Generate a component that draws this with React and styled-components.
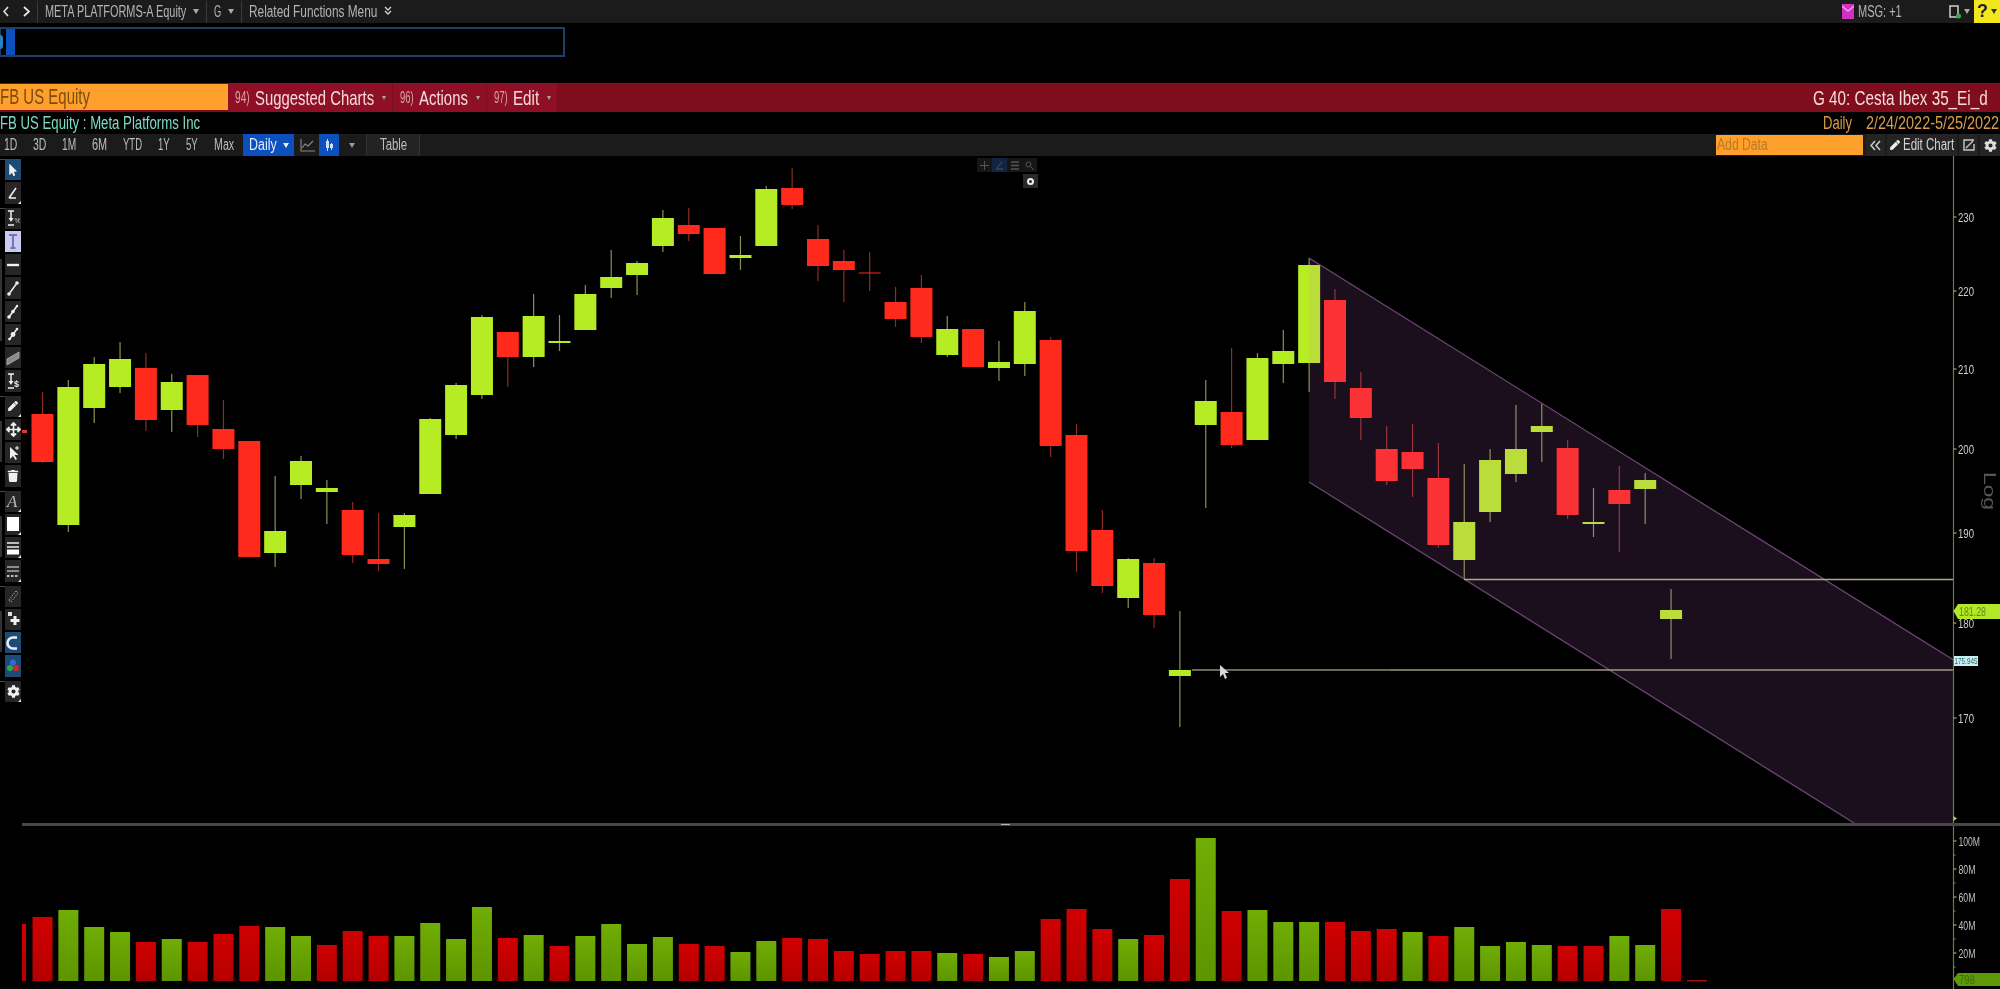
import React, { useLayoutEffect, useRef } from "react";
import styled, { createGlobalStyle } from "styled-components";
import { FaMousePointer, FaPen, FaArrowsAlt, FaTrash, FaCog } from "react-icons/fa";

const SANS = '"Liberation Sans", Arial, sans-serif';

const GlobalStyle = createGlobalStyle`
  html, body {
    margin: 0;
    background: #000;
  }
  body {
    font-family: ${SANS};
  }
`;

const Screen = styled.div`
  width: 2000px;
  height: 989px;
  overflow: hidden;
  background: #000;
  display: flex;
  flex-direction: column;
  filter: blur(0.45px);
`;

// the terminal font is far narrower than anything installed, so squeeze the text to its real width
const Squeezed = styled.span`
  display: inline-block;
  flex: none;
  width: ${(p) => p.$w}px;
  white-space: nowrap;
  transform-origin: 0 50%;
`;

const Fit = ({ w, children }) => {
  const ref = useRef(null);
  useLayoutEffect(() => {
    ref.current.style.transform = `scaleX(${w / ref.current.scrollWidth})`;
  }, [w]);
  return (
    <Squeezed ref={ref} $w={w}>
      {children}
    </Squeezed>
  );
};

/* top menu bar */
const TopBar = styled.div`
  height: 23px;
  flex: none;
  background: #1b1b1b;
  display: flex;
  align-items: center;
  color: #b4b4b4;
  font-size: 16px;
`;

const NavArrows = styled.div`
  width: 37px;
  display: flex;
  gap: 14px;
  padding-left: 3px;
  box-sizing: border-box;
`;

const TopItem = styled.div`
  height: 22px;
  display: flex;
  align-items: center;
  gap: 7px;
  padding: 0 7px;
  border-left: 1px solid #3a3a3a;
`;

const Caret = styled.span`
  flex: none;
  width: 0;
  height: 0;
  border-left: 3px solid transparent;
  border-right: 3px solid transparent;
  border-top: 5px solid ${(p) => p.$color || "#a9a9a9"};
`;

const TopRight = styled.div`
  margin-left: auto;
  display: flex;
  align-items: center;
  height: 23px;
`;

const MsgText = styled.span`
  display: flex;
  margin: 0 47px 0 4px;
`;

const WindowCaret = styled(Caret)`
  margin-left: 2px;
`;

const HelpBox = styled.div`
  width: 26px;
  height: 23px;
  margin-left: 4px;
  background: #f4e61c;
  color: #222;
  font-size: 18px;
  font-weight: 700;
  display: flex;
  align-items: center;
  justify-content: center;
  gap: 3px;
`;

/* command line */
const CommandRow = styled.div`
  height: 60px;
  flex: none;
  padding-top: 4px;
  box-sizing: border-box;
`;

const CommandBox = styled.div`
  width: 566px;
  height: 30px;
  margin-left: -1px;
  box-sizing: border-box;
  border: 2px solid #1e3f68;
  display: flex;
  align-items: stretch;
`;

const PromptMark = styled.span`
  width: 3px;
  margin: 6px 3px 6px -1px;
  background: #2a7fc0;
  border-radius: 0 3px 3px 0;
`;

const Cursor = styled.span`
  width: 9px;
  background: #0b50bd;
`;

/* red title bar */
const TitleBar = styled.div`
  height: 29px;
  flex: none;
  background: #7f0d1c;
  display: flex;
  align-items: stretch;
  color: #f3dcdc;
  font-size: 21px;
`;

const SecurityField = styled.div`
  width: 228px;
  margin: 1px 0 2px;
  background: #ffa02c;
  color: #7a4d0e;
  font-size: 22px;
  display: flex;
  align-items: center;
`;

const TitleButton = styled.div`
  display: flex;
  align-items: center;
  gap: 5px;
  padding: 0 6px 0 7px;
  background: #8f1026;
  border-right: 1px solid #7a0d1d;
`;

const ButtonNumber = styled.span`
  display: flex;
  color: #d9a0a8;
  font-size: 17px;
`;

const TitleCaret = styled(Caret)`
  margin-left: 3px;
  border-left-width: 2px;
  border-right-width: 2px;
  border-top-width: 4px;
`;

const TitleRight = styled.div`
  margin-left: auto;
  padding-right: 12px;
  display: flex;
  align-items: center;
`;

/* security name and range */
const InfoRow = styled.div`
  height: 22px;
  flex: none;
  display: flex;
  align-items: center;
  justify-content: space-between;
  font-size: 18px;
`;

const SecurityName = styled.div`
  display: flex;
  color: #7cdcc4;
`;

const RangeText = styled.div`
  color: #dc9c46;
  display: flex;
  gap: 14px;
  padding-right: 1px;
`;

/* period tabs */
const TabRow = styled.div`
  height: 22px;
  flex: none;
  background: #1b1b1b;
  display: flex;
  align-items: stretch;
  color: #bdbdbd;
  font-size: 16px;
`;

const PeriodTab = styled.div`
  padding: 0 8px;
  display: flex;
  align-items: center;
  &:first-child {
    padding-left: 4px;
  }
`;

const BlueTab = styled.div`
  margin-left: ${(p) => p.$gap || 0}px;
  width: ${(p) => p.$w}px;
  background: #0b50bd;
  color: #e6eefc;
  display: flex;
  align-items: center;
  justify-content: center;
  gap: 6px;
`;

const IconTab = styled.div`
  width: 24px;
  margin-left: 1px;
  display: flex;
  align-items: center;
  justify-content: center;
`;

const TableTab = styled.div`
  margin-left: 2px;
  width: 52px;
  background: #232323;
  border-left: 1px solid #333;
  border-right: 1px solid #333;
  display: flex;
  align-items: center;
  justify-content: center;
`;

const TabRight = styled.div`
  margin-left: auto;
  display: flex;
  align-items: stretch;
`;

const AddData = styled.div`
  width: 147px;
  margin: 1px 1px 1px 0;
  background: #ffa02c;
  color: #b87a22;
  padding-left: 1px;
  box-sizing: border-box;
  display: flex;
  align-items: center;
`;

const RightTab = styled.div`
  width: ${(p) => p.$w}px;
  margin-left: 2px;
  background: #242424;
  display: flex;
  align-items: center;
  justify-content: center;
  gap: 3px;
  color: #d4d4d4;
`;

/* chart body */
const Body = styled.div`
  flex: 1;
  display: flex;
  min-height: 0;
`;

const ToolRail = styled.div`
  width: 22px;
  flex: none;
  padding-top: 3px;
  box-sizing: border-box;
  display: flex;
  flex-direction: column;
  gap: 4px;
`;

const ToolGroup = styled.div`
  display: flex;
  align-items: stretch;
`;

// the group captions sit behind the rail's edge and can't be read, only a sliver shows
const GroupEdge = styled.div`
  width: 5px;
  flex: none;
  border-top: 1px solid #4a4a4a;
  display: flex;
  align-items: center;
  &::before {
    content: "";
    width: 2px;
    height: ${(p) => (p.$long ? "45%" : "0")};
    background: #333;
  }
`;

const ToolColumn = styled.div`
  width: 16px;
  display: flex;
  flex-direction: column;
  gap: 2px;
`;

const ToolButton = styled.div`
  position: relative;
  height: 21.25px;
  background: ${(p) => p.$bg || "#262626"};
  color: #f0f0f0;
  display: flex;
  align-items: center;
  justify-content: center;
  &::after {
    content: "";
    display: ${(p) => (p.$menu ? "block" : "none")};
    position: absolute;
    right: 0;
    bottom: 0;
    border-left: 3px solid transparent;
    border-bottom: 3px solid #e8e8e8;
  }
`;

const ChartColumn = styled.div`
  position: relative;
  flex: 1;
  display: flex;
  flex-direction: column;
  min-width: 0;
`;

const PriceSvg = styled.svg`
  display: block;
  width: 1978px;
  height: 667px;
  flex: none;
`;

const Divider = styled.div`
  position: relative;
  height: 3px;
  flex: none;
  background: #474747;
`;

const DividerGrip = styled.span`
  position: absolute;
  left: 979px;
  top: 1px;
  width: 9px;
  height: 1px;
  background: #b5b5b5;
`;

const VolumeSvg = styled.svg`
  display: block;
  width: 1978px;
  height: 163px;
  flex: none;
`;

const ZoomTools = styled.div`
  position: absolute;
  left: 955px;
  top: 2px;
  display: flex;
`;

const ZoomTool = styled.div`
  width: 15px;
  height: 14px;
  background: ${(p) => (p.$active ? "#122440" : "#161616")};
  display: flex;
  align-items: center;
  justify-content: center;
`;

const ResetTool = styled.div`
  position: absolute;
  left: 1001px;
  top: 18px;
  width: 15px;
  height: 14px;
  background: #2a2a2a;
  display: flex;
  align-items: center;
  justify-content: center;
`;

const RingDot = styled.span`
  width: 3px;
  height: 3px;
  border: 2px solid #eee;
  border-radius: 50%;
`;

// [bodyTop, bodyBottom, wickTop, wickBottom, colour]
const candles = [
  [414, 462, 392, 463, "r"], [387, 525, 380, 532, "g"], [364, 408, 357, 423, "g"], [359, 387, 342, 393, "g"],
  [368, 420, 353, 431, "r"], [382, 410, 374, 432, "g"], [375, 425, 375, 437, "r"], [429, 449, 400, 459, "r"],
  [441, 557, 441, 557, "r"], [531, 553, 476, 567, "g"], [461, 485, 456, 499, "g"], [488, 492, 480, 524, "g"],
  [510, 555, 502, 563, "r"], [559, 564, 513, 571, "r"], [515, 527, 513, 569, "g"], [419, 494, 418, 494, "g"],
  [385, 435, 383, 439, "g"], [317, 395, 315, 399, "g"], [332, 357, 332, 387, "r"], [316, 357, 294, 367, "g"],
  [341, 343, 315, 351, "g"], [294, 330, 285, 330, "g"], [277, 288, 250, 298, "g"], [263, 275, 261, 295, "g"],
  [218, 246, 210, 252, "g"], [225, 234, 208, 241, "r"], [228, 274, 228, 274, "r"], [255, 258, 236, 270, "g"],
  [189, 246, 186, 246, "g"], [188, 205, 168, 209, "r"], [239, 266, 225, 281, "r"], [261, 270, 250, 302, "r"],
  [272.5, 273.5, 252, 291, "r"], [302, 319, 287, 327, "r"], [288, 337, 275, 343, "r"], [329, 355, 316, 357, "g"],
  [329, 367, 329, 367, "r"], [362, 368, 341, 381, "g"], [311, 364, 302, 376, "g"], [340, 446, 337, 457, "r"],
  [435, 551, 424, 572, "r"], [530, 586, 510, 593, "r"], [559, 598, 558, 608, "g"], [563, 615, 558, 628, "r"],
  [670, 676, 611, 727, "g"], [401, 425, 380, 508, "g"], [412, 445, 348, 448, "r"], [358, 440, 353, 440, "g"],
  [351, 364, 330, 383, "g"], [265, 363, 258, 392, "g"], [300, 382, 289, 399, "r"], [388, 418, 372, 440, "r"],
  [449, 481, 426, 485, "r"], [452, 469, 424, 497, "r"], [478, 545, 443, 548, "r"], [522, 560, 464, 579, "g"],
  [460, 512, 449, 522, "g"], [449, 474, 405, 482, "g"], [426, 432, 404, 462, "g"], [448, 515, 440, 519, "r"],
  [522, 524, 488, 537, "g"], [490, 504, 466, 552, "r"], [480, 489, 473, 524, "g"], [610, 619, 589, 659, "g"],
];

// [barTop, colour]
const volumes = [
  [917, "r"], [910, "g"], [927, "g"], [932, "g"], [942, "r"], [939, "g"], [942, "r"], [934, "r"], [926, "r"],
  [927, "g"], [936, "g"], [945, "r"], [931, "r"], [936, "r"], [936, "g"], [923, "g"], [939, "g"], [907, "g"],
  [938, "r"], [935, "g"], [946, "r"], [936, "g"], [924, "g"], [944, "g"], [937, "g"], [944, "r"], [946, "r"],
  [952, "g"], [941, "g"], [938, "r"], [939, "r"], [951, "r"], [954, "r"], [951, "r"], [951, "r"], [953, "g"],
  [954, "r"], [957, "g"], [951, "g"], [919, "r"], [909, "r"], [929, "r"], [939, "g"], [935, "r"], [879, "r"],
  [838, "g"], [911, "r"], [910, "g"], [922, "g"], [922, "g"], [922, "r"], [931, "r"], [929, "r"], [932, "g"],
  [936, "r"], [927, "g"], [946, "g"], [942, "g"], [945, "g"], [946, "r"], [946, "r"], [936, "g"], [945, "g"],
  [909, "r"],
];

const priceTicks = [
  [217, "230"], [291, "220"], [369, "210"], [449, "200"], [533, "190"], [623, "180"], [718, "170"],
];
const volumeTicks = [
  [841, "100M", 21.5], [869, "80M", 17], [897, "60M", 17], [925, "40M", 17], [953, "20M", 17],
];

const slotX = (i) => 42.5 + 25.85 * i;
const AXIS_X = 1953.5;
const AXIS_COLOR = "#64804a";

const PriceChart = () => (
  <PriceSvg viewBox="22 156 1978 667">
    {/* bar cut off by the tool rail */}
    <rect x="16" y="430" width="11" height="3" fill="#e8362a" />
    {candles.map(([top, bottom, wickTop, wickBottom, tone], i) => {
      const x = slotX(i);
      return (
        <g key={i}>
          <line
            x1={x}
            x2={x}
            y1={wickTop}
            y2={wickBottom}
            stroke={tone === "g" ? "#87944f" : "#8f2c22"}
            strokeWidth="1.2"
          />
          <rect
            x={x - 11}
            y={top}
            width="22"
            height={bottom - top}
            fill={tone === "g" ? "#b5ec24" : "#ff2a1c"}
          />
        </g>
      );
    })}
    <polygon
      points={`1309,258 ${AXIS_X},660 ${AXIS_X},823 1854,823 1309,482`}
      fill="rgba(224,112,240,0.12)"
    />
    <polyline points={`1309,258 ${AXIS_X},660`} fill="none" stroke="#6f4a75" strokeWidth="1.2" />
    <polyline points="1309,482 1854,823" fill="none" stroke="#6f4a75" strokeWidth="1.2" />
    <line x1="1464" x2={AXIS_X} y1="579.5" y2="579.5" stroke="#b3a88e" strokeWidth="1.5" />
    <line x1="1192" x2="1390" y1="670" y2="670" stroke="#8f8a78" strokeWidth="1.5" />
    <line x1="1390" x2={AXIS_X} y1="670" y2="670" stroke="#a09a84" strokeWidth="1.5" />
    {/* mouse pointer */}
    <path d="M1220 665 l0 12 l3 -3 l2 5 l2 -1 l-2 -5 l4 0 z" fill="#d8d8d8" />
    <line x1={AXIS_X} x2={AXIS_X} y1="156" y2="823" stroke={AXIS_COLOR} strokeWidth="1.2" />
    <g fontFamily={SANS} fontSize="13.5" fill="#cfcfcf">
      {priceTicks.map(([y, label]) => (
        <g key={label}>
          <line x1={AXIS_X} x2={AXIS_X + 3} y1={y} y2={y} stroke="#b5d060" />
          <text x="1958" y={y + 5} textLength="16" lengthAdjust="spacingAndGlyphs">{label}</text>
        </g>
      ))}
    </g>
    <text
      transform="translate(1983.5 491) rotate(90)"
      textAnchor="middle"
      fontFamily={SANS}
      fontSize="17"
      fill="#565656"
      textLength="38"
      lengthAdjust="spacingAndGlyphs"
    >
      Log
    </text>
    <polygon points={`${AXIS_X},611 1958,604 2000,604 2000,619 1958,619`} fill="#b4e62a" />
    <text x="1959" y="616" fontFamily={SANS} fontSize="13" fill="#5f8a0c" textLength="27" lengthAdjust="spacingAndGlyphs">181.28</text>
    <rect x="1954" y="656" width="24" height="10" fill="#c9eeee" />
    <text x="1954.5" y="664" fontFamily={SANS} fontSize="9.5" fill="#2f6f7a" textLength="23" lengthAdjust="spacingAndGlyphs">175.945</text>
    <polygon points={`${AXIS_X},816 1957,818.5 ${AXIS_X},821`} fill="#b5d060" />
  </PriceSvg>
);

const VolumeChart = () => (
  <VolumeSvg viewBox="22 826 1978 163">
    <defs>
      <linearGradient id="volGreen" x1="0" x2="0" y1="0" y2="1">
        <stop offset="0" stopColor="#70ad05" />
        <stop offset="1" stopColor="#5d9400" />
      </linearGradient>
      <linearGradient id="volRed" x1="0" x2="0" y1="0" y2="1">
        <stop offset="0" stopColor="#d00000" />
        <stop offset="1" stopColor="#b40000" />
      </linearGradient>
    </defs>
    <rect x="16" y="924" width="10" height="57" fill="url(#volRed)" />
    {volumes.map(([top, tone], i) => (
      <rect
        key={i}
        x={slotX(i) - 10}
        y={top}
        width="20"
        height={981 - top}
        fill={tone === "g" ? "url(#volGreen)" : "url(#volRed)"}
      />
    ))}
    <rect x="1687" y="980" width="20" height="1.5" fill="#a01010" />
    <line x1={AXIS_X} x2={AXIS_X} y1="826" y2="989" stroke={AXIS_COLOR} strokeWidth="1.2" />
    <g fontFamily={SANS} fontSize="13" fill="#bfbfbf">
      {volumeTicks.map(([y, label, width]) => (
        <g key={label}>
          <line x1={AXIS_X} x2={AXIS_X + 3} y1={y} y2={y} stroke="#b5d060" />
          <line x1={AXIS_X} x2={AXIS_X + 2} y1={y + 14} y2={y + 14} stroke="#7f9a50" />
          <text x="1958.5" y={y + 5} textLength={width} lengthAdjust="spacingAndGlyphs">{label}</text>
        </g>
      ))}
    </g>
    <polygon points={`${AXIS_X},979 1958,973 2000,973 2000,986 1958,986`} fill="#5e9a08" />
    <text x="1959" y="984" fontFamily={SANS} fontSize="13" fill="#3f6a08" textLength="16" lengthAdjust="spacingAndGlyphs">798</text>
  </VolumeSvg>
);

const I = ({ children }) => (
  <svg width="14" height="18" viewBox="0 0 14 18" fill="none" stroke="#f0f0f0" strokeWidth="1.5">
    {children}
  </svg>
);

const Beam = () => (
  <>
    <path d="M2 2h6M5 2v8M2 16h6" />
    <path d="M2.5 9h5L5 13z" fill="#f0f0f0" stroke="none" />
  </>
);

const Dot = ({ x, y, r = 1.8 }) => <circle cx={x} cy={y} r={r} fill="#f0f0f0" stroke="none" />;

const toolGroups = [
  {
    tools: [
      { bg: "#1f4a73", icon: <FaMousePointer size={12} /> },
      { menu: true, icon: <I><path d="M3 14L10 4M3 14h7" strokeWidth="1.6" /></I> },
    ],
  },
  {
    long: true,
    tools: [
      { icon: <I><Beam /><text x="8.5" y="14" fontSize="7" fill="#d0d0d0" stroke="none" fontFamily={SANS}>%</text></I> },
      { bg: "#c9c9f2", icon: <I><path d="M3 3h8M7 3v13M4.5 16h5" stroke="#7474b0" strokeWidth="2" /></I> },
      { icon: <I><path d="M1 9h12" strokeWidth="2.4" /></I> },
      { icon: <I><path d="M3 15L11 4" /><Dot x={3} y={15} /><Dot x={11} y={4} /></I> },
      { icon: <I><path d="M3 15L11 4" strokeWidth="1.6" /><Dot x={3} y={15} /><Dot x={7} y={9.5} /><Dot x={11} y={4} r={1.2} /></I> },
      { icon: <I><path d="M3 15L11 4" /><Dot x={3.5} y={14} r={1.3} /><Dot x={7} y={9.5} r={2.4} /><Dot x={11} y={4} r={1.3} /></I> },
      { icon: <I><path d="M1 10L13 3v6L1 16z" fill="#8a8a8a" stroke="#b0b0b0" strokeWidth="0.8" /></I> },
      { icon: <I><Beam /><text x="8" y="15" fontSize="9" fontWeight="700" fill="#e8e8e8" stroke="none" fontFamily={SANS}>$</text></I> },
    ],
  },
  {
    long: true,
    tools: [
      { menu: true, icon: <FaPen size={10} /> },
      { icon: <FaArrowsAlt size={15} /> },
      { icon: <I><path d="M4 3v12l3-3 2.5 4 1.5-1-2.5-4h4z" fill="#f0f0f0" stroke="none" /><path d="M11 2v4M9 4h4" strokeWidth="1" /></I> },
      { icon: <FaTrash size={12} /> },
    ],
  },
  {
    long: true,
    tools: [
      { menu: true, icon: <I><text x="1" y="15" fontSize="17" fontStyle="italic" fill="#bbb" stroke="none" fontFamily='"Liberation Serif", serif'>A</text></I> },
      { menu: true, icon: <I><rect x="1" y="2" width="12" height="14" fill="#fff" stroke="none" /></I> },
      { menu: true, icon: <I><path d="M1 4h12M1 8h12" strokeWidth="1.6" /><rect x="1" y="10.5" width="12" height="5" fill="#fff" stroke="none" /></I> },
      { menu: true, icon: <I><path d="M1 5h12M1 9h12" strokeWidth="1.2" /><path d="M1 14h12" strokeWidth="1.6" strokeDasharray="2.5 1.5" /></I> },
    ],
  },
  {
    long: true,
    tools: [
      { icon: <I><path d="M3 13L10 4M5 15L12 6M3 13l2 2M10 4l2 2" stroke="#9a9a9a" strokeWidth="1" strokeDasharray="1.5 1" /></I> },
      { icon: <I><rect x="2" y="2" width="4" height="4" fill="#ddd" stroke="none" /><path d="M9 6v9M4.5 10.5h9" strokeWidth="3" /></I> },
      { bg: "#1f4a73", icon: <I><path d="M11 3.5H7a5.5 5.5 0 0 0 0 11h4" strokeWidth="2.6" stroke="#e4eef7" /></I> },
      { bg: "#1f4a73", icon: <I><circle cx="7" cy="5.5" r="3" fill="#2d6bd0" stroke="none" /><circle cx="4" cy="11" r="3" fill="#27b040" stroke="none" /><circle cx="10" cy="11" r="3" fill="#d02828" stroke="none" /></I> },
    ],
  },
  {
    tools: [{ menu: true, icon: <FaCog size={13} /> }],
  },
];

const periods = [
  ["1D", 13], ["3D", 13], ["1M", 14], ["6M", 15], ["YTD", 19], ["1Y", 12], ["5Y", 12], ["Max", 20],
];

const App = () => (
  <Screen>
    <GlobalStyle />
    <TopBar>
      <NavArrows>
        <svg width="6" height="11" viewBox="0 0 6 11" fill="none" stroke="#e4e4e4" strokeWidth="1.6"><path d="M5 1L1 5.5 5 10" /></svg>
        <svg width="7" height="11" viewBox="0 0 7 11" fill="none" stroke="#e4e4e4" strokeWidth="1.8"><path d="M1 1l5 4.5L1 10" /></svg>
      </NavArrows>
      <TopItem><Fit w={141}>META PLATFORMS-A Equity</Fit><Caret /></TopItem>
      <TopItem><Fit w={7}>G</Fit><Caret /></TopItem>
      <TopItem>
        <Fit w={128}>Related Functions Menu</Fit>
        <svg width="8" height="11" viewBox="0 0 8 11" fill="none" stroke="#cfcfcf" strokeWidth="1.4"><path d="M1 1l3 3 3-3M1 5l3 3 3-3" /></svg>
      </TopItem>
      <TopRight>
        <svg width="12" height="15" viewBox="0 0 12 15">
          <rect width="12" height="15" fill="#d22fc4" />
          <path d="M0 2l6 5 6-5" fill="none" stroke="#efa0e6" strokeWidth="1.5" />
        </svg>
        <MsgText><Fit w={44}>MSG: +1</Fit></MsgText>
        <svg width="13" height="14" viewBox="0 0 13 14" fill="none">
          <rect x="1" y="1" width="8" height="11" stroke="#cfcfcf" strokeWidth="1.5" />
          <circle cx="9.5" cy="11" r="2.5" fill="#2fb050" />
        </svg>
        <WindowCaret />
        <HelpBox>? <Caret $color="#333" /></HelpBox>
      </TopRight>
    </TopBar>

    <CommandRow>
      <CommandBox>
        <PromptMark />
        <Cursor />
      </CommandBox>
    </CommandRow>

    <TitleBar>
      <SecurityField><Fit w={90}>FB US Equity</Fit></SecurityField>
      <TitleButton>
        <ButtonNumber><Fit w={15}>94)</Fit></ButtonNumber>
        <Fit w={119}>Suggested Charts</Fit>
        <TitleCaret />
      </TitleButton>
      <TitleButton>
        <ButtonNumber><Fit w={14}>96)</Fit></ButtonNumber>
        <Fit w={49}>Actions</Fit>
        <TitleCaret />
      </TitleButton>
      <TitleButton>
        <ButtonNumber><Fit w={14}>97)</Fit></ButtonNumber>
        <Fit w={26}>Edit</Fit>
        <TitleCaret />
      </TitleButton>
      <TitleRight><Fit w={175}>G 40: Cesta Ibex 35_Ei_d</Fit></TitleRight>
    </TitleBar>

    <InfoRow>
      <SecurityName><Fit w={200}>FB US Equity : Meta Platforms Inc</Fit></SecurityName>
      <RangeText>
        <Fit w={29}>Daily</Fit>
        <Fit w={133}>2/24/2022-5/25/2022</Fit>
      </RangeText>
    </InfoRow>

    <TabRow>
      {periods.map(([label, width]) => (
        <PeriodTab key={label}><Fit w={width}>{label}</Fit></PeriodTab>
      ))}
      <BlueTab $w={51} $gap={1}><Fit w={28}>Daily</Fit><Caret $color="#e6eefc" /></BlueTab>
      <IconTab>
        <svg width="15" height="13" viewBox="0 0 15 13" fill="none" stroke="#8a8a8a" strokeWidth="1.1"><path d="M1 0v12h14M2 9l3-4 3 2 5-5" /></svg>
      </IconTab>
      <BlueTab $w={20}>
        <svg width="9" height="14" viewBox="0 0 9 14" fill="#cfe0f6"><path d="M2 1h1v2h1v7H3v3H2v-3H1V3h1zM6 5h1v1h1v4H7v2H6v-2H5V6h1z" /></svg>
      </BlueTab>
      <IconTab><Caret $color="#999" /></IconTab>
      <TableTab><Fit w={27}>Table</Fit></TableTab>
      <TabRight>
        <AddData><Fit w={51}>Add Data</Fit></AddData>
        <RightTab $w={19}>
          <svg width="12" height="11" viewBox="0 0 12 11" fill="none" stroke="#c8c8c8" strokeWidth="1.6"><path d="M5 1L1 5.5 5 10M10 1L6 5.5l4 4.5" /></svg>
        </RightTab>
        <RightTab $w={70}><FaPen size={10} color="#eee" /><Fit w={51}>Edit Chart</Fit></RightTab>
        <RightTab $w={19}>
          <svg width="12" height="12" viewBox="0 0 12 12" fill="none" stroke="#c8c8c8" strokeWidth="1.4"><path d="M11 1H1v10h10V5M3 9l7-7" /></svg>
        </RightTab>
        <RightTab $w={20}><FaCog size={13} color="#ddd" /></RightTab>
      </TabRight>
    </TabRow>

    <Body>
      <ToolRail>
        {toolGroups.map((group, g) => (
          <ToolGroup key={g}>
            <GroupEdge $long={group.long} />
            <ToolColumn>
              {group.tools.map((tool, t) => (
                <ToolButton key={t} $bg={tool.bg} $menu={tool.menu}>
                  {tool.icon}
                </ToolButton>
              ))}
            </ToolColumn>
          </ToolGroup>
        ))}
      </ToolRail>

      <ChartColumn>
        <PriceChart />
        <ZoomTools>
          <ZoomTool>
            <svg width="9" height="9" viewBox="0 0 9 9" stroke="#555" fill="none"><path d="M4.5 0v9M0 4.5h9" /></svg>
          </ZoomTool>
          <ZoomTool $active>
            <svg width="9" height="9" viewBox="0 0 9 9" stroke="#456" fill="none"><path d="M1 8L7 1M1 8h7" /></svg>
          </ZoomTool>
          <ZoomTool>
            <svg width="8" height="9" viewBox="0 0 8 9" stroke="#555" fill="none"><path d="M0 1h8M0 4.5h8M0 8h8" strokeWidth="1.6" /></svg>
          </ZoomTool>
          <ZoomTool>
            <svg width="9" height="9" viewBox="0 0 9 9" stroke="#555" fill="none"><circle cx="3.5" cy="3.5" r="2.5" /><path d="M5.5 5.5L9 9" /></svg>
          </ZoomTool>
        </ZoomTools>
        <ResetTool><RingDot /></ResetTool>
        <Divider><DividerGrip /></Divider>
        <VolumeChart />
      </ChartColumn>
    </Body>
  </Screen>
);

export default App;
